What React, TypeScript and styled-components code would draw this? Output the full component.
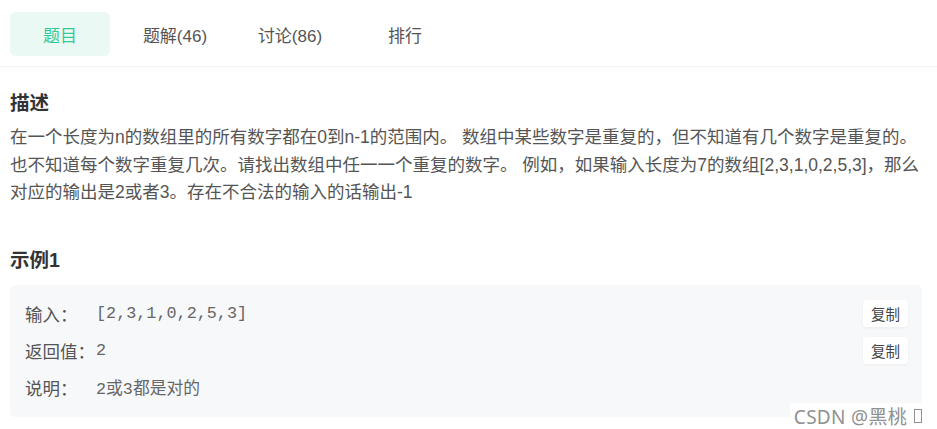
import React from 'react';
import styled, { createGlobalStyle } from 'styled-components';

const GlobalStyle = createGlobalStyle`
  html, body {
    margin: 0;
    padding: 0;
    background: #fff;
  }

  body {
    font-family: 'Liberation Sans', Arial, 'Noto Sans CJK SC', sans-serif;
    color: #333;
  }
`;

const Page = styled.div`
  position: relative;
  width: 937px;
  height: 429px;
  overflow: hidden;
`;

const TabBar = styled.div`
  display: flex;
  gap: 15px;
  padding: 12px 10px 10px;
  border-bottom: 1px solid #f2f2f2;
`;

const Tab = styled.div<{ $active?: boolean }>`
  width: 100px;
  height: 44px;
  display: flex;
  align-items: center;
  justify-content: center;
  border-radius: 6px;
  font-size: 17px;
  background: ${({ $active }) => ($active ? '#ebf9f5' : 'transparent')};
  color: ${({ $active }) => ($active ? '#32ca99' : '#555')};
`;

const Content = styled.div`
  padding: 0 5px 0 10px;
`;

const Heading = styled.h3<{ $top: number }>`
  margin: ${({ $top }) => $top}px 0 0;
  font-size: 19.5px;
  line-height: 26px;
  font-weight: bold;
  color: #333;
`;

const Paragraph = styled.p`
  margin: 8px 0 0;
  font-size: 17.5px;
  line-height: 27.5px;
  color: #555;
`;

const ExampleBox = styled.div`
  width: 883px;
  margin-top: 12px;
  padding: 10px 14px 11px 15px;
  background: #f7f8fa;
  border-radius: 5px;
`;

const Row = styled.div`
  display: flex;
  align-items: center;
  height: 37px;
`;

const Label = styled.span`
  width: 71px;
  flex-shrink: 0;
  font-size: 17.5px;
  color: #555;
`;

const Value = styled.span`
  flex: 1;
  font-family: 'Liberation Mono', 'Courier New', 'Noto Sans CJK SC', monospace;
  font-size: 16.8px;
  color: #666;
`;

const CopyButton = styled.button`
  width: 45px;
  height: 27px;
  padding: 0;
  border: none;
  border-radius: 4px;
  background: #fff;
  box-shadow: 0 1px 3px rgba(0, 0, 0, 0.05);
  font-family: 'Liberation Sans', 'Noto Sans CJK SC', sans-serif;
  font-size: 14.5px;
  color: #444;
`;

const Watermark = styled.div`
  position: absolute;
  right: 0;
  bottom: 0;
  width: 147px;
  height: 26px;
  padding-right: 15px;
  box-sizing: border-box;
  background: #fff;
  display: flex;
  align-items: center;
  justify-content: flex-end;
  gap: 7px;
  font-family: 'Noto Sans', 'Noto Sans CJK SC', sans-serif;
  font-size: 19px;
  letter-spacing: 0.3px;
  color: #909090;
`;

const Tofu = styled.span`
  display: inline-block;
  width: 6px;
  height: 12px;
  border: 1px solid #909090;
`;

const tabs = [
  { label: '题目', active: true },
  { label: '题解(46)' },
  { label: '讨论(86)' },
  { label: '排行' },
];

const rows = [
  { label: '输入：', value: '[2,3,1,0,2,5,3]', copy: true },
  { label: '返回值：', value: '2', copy: true },
  { label: '说明：', value: '2或3都是对的', copy: false },
];

export default function App(): React.ReactElement {
  return (
    <Page>
      <GlobalStyle />
      <TabBar>
        {tabs.map((tab) => (
          <Tab key={tab.label} $active={tab.active}>{tab.label}</Tab>
        ))}
      </TabBar>
      <Content>
        <Heading $top={23}>描述</Heading>
        <Paragraph>
          在一个长度为n的数组里的所有数字都在0到n-1的范围内。 数组中某些数字是重复的，但不知道有几个数字是重复的。也不知道每个数字重复几次。请找出数组中任一一个重复的数字。 例如，如果输入长度为7的数组[2,3,1,0,2,5,3]，那么对应的输出是2或者3。存在不合法的输入的话输出-1
        </Paragraph>
        <Heading $top={40}>示例1</Heading>
        <ExampleBox>
          {rows.map((row) => (
            <Row key={row.label}>
              <Label>{row.label}</Label>
              <Value>{row.value}</Value>
              {row.copy && <CopyButton>复制</CopyButton>}
            </Row>
          ))}
        </ExampleBox>
      </Content>
      <Watermark>
        <span>CSDN @黑桃</span>
        <Tofu />
      </Watermark>
    </Page>
  );
}
